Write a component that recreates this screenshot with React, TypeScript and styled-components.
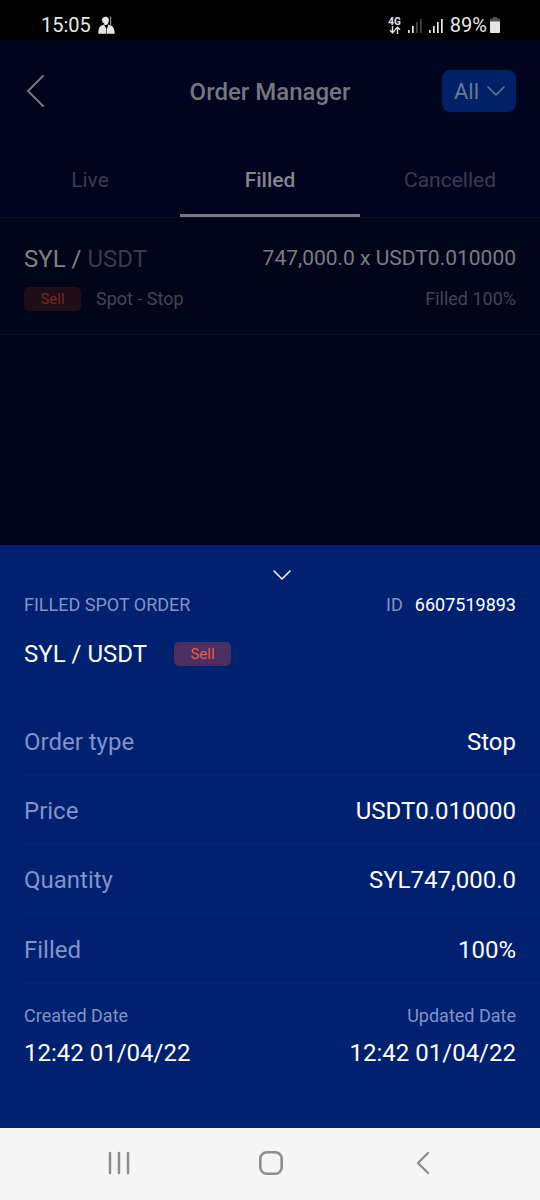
import React from "react";
import styled, { createGlobalStyle } from "styled-components";

const GlobalStyle = createGlobalStyle`
  *, *::before, *::after { box-sizing: border-box; }
  body { margin: 0; background: #02041a; font-family: Roboto, "Noto Sans", sans-serif; }
  h1, h2, p, dl, dd { margin: 0; font-weight: 400; }
  button { font: inherit; border: 0; padding: 0; background: none; color: inherit; cursor: pointer; }
  svg { display: block; flex: none; }
`;

const Screen = styled.div`
  display: flex;
  flex-direction: column;
  min-height: 100vh;
`;

const StatusBar = styled.div`
  display: flex;
  align-items: center;
  justify-content: space-between;
  height: 40px;
  padding: 10px 40px 0 41px;
  background: #000;
  color: #e6e6e6;
  font-size: 20px;
  line-height: 24px;
`;

const StatusGroup = styled.div<{ $gap: number }>`
  display: flex;
  align-items: center;
  gap: ${(p) => p.$gap}px;
`;

const Network = styled.div`
  display: flex;
  flex-direction: column;
  align-items: center;
  font-size: 10px;
  font-weight: 700;
  line-height: 9px;
`;

const Header = styled.header`
  display: grid;
  grid-template-columns: 1fr auto 1fr;
  align-items: center;
  height: 104px;
  padding: 0 24px 2px;
  background: #00041e;
  color: #74777d;
`;

const Title = styled.h1`
  padding-top: 2px;
  font-size: 24px;
  font-weight: 500;
  line-height: 32px;
`;

const BackButton = styled.button`
  justify-self: start;
`;

const FilterButton = styled.button`
  && {
    display: flex;
    align-items: center;
    justify-content: space-between;
    justify-self: end;
    width: 74px;
    height: 42px;
    padding: 0 11px 0 12px;
    border-radius: 8px;
    background: #002068;
    color: #6c7894;
    font-size: 22px;
  }
`;

const Tabs = styled.div`
  display: grid;
  grid-template-columns: repeat(3, 1fr);
  height: 74px;
  background: #00041e;
  border-bottom: 1px solid #040d2c;
`;

const Tab = styled.button<{ $active?: boolean }>`
  && {
    padding-top: 2px;
    border-bottom: 3px solid ${(p) => (p.$active ? "#777a80" : "transparent")};
    color: ${(p) => (p.$active ? "#85878d" : "#383c52")};
    font-size: 21px;
    font-weight: ${(p) => (p.$active ? 500 : 400)};
  }
`;

const OrderRow = styled.article`
  display: flex;
  flex-direction: column;
  gap: 12px;
  height: 117px;
  padding: 25px 24px 0;
  border-bottom: 1px solid #040f34;
`;

const Line = styled.div`
  display: flex;
  align-items: center;
  justify-content: space-between;
`;

const OrderPair = styled.h2`
  color: #808286;
  font-size: 24px;
  line-height: 32px;

  span { color: #383b4e; }
`;

const OrderAmount = styled.p`
  padding-bottom: 2px;
  color: #7a7c81;
  font-size: 21px;
  line-height: 28px;
`;

const OrderNote = styled.span`
  color: #424557;
  font-size: 18px;
  line-height: 24px;
`;

const TagGroup = styled.div`
  display: flex;
  align-items: center;
  gap: 15px;
`;

const SellTag = styled.span<{ $dimmed?: boolean }>`
  width: 57px;
  height: 24px;
  border-radius: 5px;
  background: ${(p) => (p.$dimmed ? "#210d18" : "#4b2f60")};
  color: ${(p) => (p.$dimmed ? "#75291b" : "#ee594a")};
  font-size: 15px;
  line-height: 24px;
  text-align: center;
`;

const Sheet = styled.section`
  display: flex;
  flex-direction: column;
  min-height: 583px;
  margin-top: auto;
  background: #002070;
  color: #fff;
`;

const CollapseButton = styled.button`
  && {
    display: flex;
    justify-content: center;
    padding: 25px 0 13px 24px;
  }
`;

const SheetLine = styled(Line)`
  padding: 0 24px;
  font-size: 18px;
  line-height: 24px;
`;

const Muted = styled.span`
  color: #8193cb;
`;

const OrderId = styled.p`
  display: flex;
  gap: 12px;
`;

const SheetPair = styled.div`
  display: flex;
  align-items: center;
  gap: 27px;
  padding: 20px 24px 36px;

  h2 { font-size: 24px; line-height: 34px; }
`;

const Details = styled.dl`
  margin-left: 24px;
`;

const DetailRow = styled.div`
  display: flex;
  align-items: center;
  justify-content: space-between;
  height: 69px;
  padding: 2px 24px 0 0;
  border-bottom: 1px solid #032678;
  font-size: 24px;
  line-height: 32px;

  &:last-child { height: 70px; }

  dt { color: #8193cb; }
`;

const Dates = styled.dl`
  display: flex;
  justify-content: space-between;
  padding: 20px 24px 0;

  div:last-child { text-align: right; }

  dt { color: #8193cb; font-size: 18px; line-height: 24px; }

  dd { margin-top: 9px; font-size: 24px; line-height: 32px; }
`;

const NavBar = styled.nav`
  display: grid;
  grid-template-columns: repeat(3, 152px);
  justify-content: center;
  height: 72px;
  padding: 0 0 2px 2px;
  background: #f5f5f5;
  color: #8c8c8c;

  button { display: grid; place-items: center; }
`;

function Signal({ strength }: { strength: number }) {
  return (
    <svg width="14" height="15" viewBox="0 0 14 15" fill="#e6e6e6" aria-hidden="true">
      {[3, 7, 11, 14].map((h, i) => (
        <rect key={h} x={i * 4} y={15 - h} width="1.7" height={h} opacity={i < strength ? 1 : 0.3} />
      ))}
    </svg>
  );
}

function ChevronDown() {
  return (
    <svg width="18" height="10" viewBox="0 0 18 10" fill="none" stroke="currentColor" strokeWidth="1.5" strokeLinecap="round" strokeLinejoin="round" aria-hidden="true">
      <path d="M1 1l8 8 8-8" />
    </svg>
  );
}

function PersonIcon() {
  return (
    <svg width="17" height="18" viewBox="0 0 17 18" fill="#e6e6e6" aria-hidden="true">
      <path d="M4.500 2.200C5.500.8 7.500.3 9 1c1.600.7 2.200 2.200 1.800 4-.3 1.600-.9 3-1.800 4H6.500L6 7 4.300 6.500 4.600 5 3.500 4.500z" />
      <path d="M6 8.500L8.300 13v4.800H.3c0-3.300.7-7 2.700-8zM8.900 13l1.600-4.500 3 1.300c2.200 1 3.100 4.500 3.200 8H8.900z" />
      <path d="M12 .5h1.200v9l-1.200-.6z" opacity=".6" />
    </svg>
  );
}

const details = [
  ["Order type", "Stop"],
  ["Price", "USDT0.010000"],
  ["Quantity", "SYL747,000.0"],
  ["Filled", "100%"],
];

const dates = [
  ["Created Date", "12:42 01/04/22"],
  ["Updated Date", "12:42 01/04/22"],
];

export default function App() {
  return (
    <Screen>
      <GlobalStyle />
      <StatusBar>
        <StatusGroup $gap={7}>
          <span>15:05</span>
          <PersonIcon />
        </StatusGroup>
        <StatusGroup $gap={7}>
          <Network>
            <span>4G</span>
            <svg width="12" height="8" viewBox="0 0 12 8" fill="none" stroke="currentColor" strokeWidth="1.4" aria-hidden="true">
              <path d="M3.500 0v6.700M1 4.300l2.500 2.500L6 4.300M8.500 8V1.300M6 3.700l2.500-2.500L11 3.700" />
            </svg>
          </Network>
          <Signal strength={2} />
          <Signal strength={4} />
          <StatusGroup $gap={3}>
            <span>89%</span>
            <svg width="10" height="16" viewBox="0 0 10 16" fill="#e6e6e6" aria-hidden="true">
              <path d="M3 0h4v1.500h2q1 0 1 1V5H0V2.500q0-1 1-1h2z" fill="#555" />
              <path d="M0 4.500h10V15q0 1-1 1H1q-1 0-1-1z" />
            </svg>
          </StatusGroup>
        </StatusGroup>
      </StatusBar>

      <Header>
        <BackButton aria-label="Back">
          <svg width="22" height="32" viewBox="0 0 22 32" fill="none" stroke="currentColor" strokeWidth="2" strokeLinecap="round" strokeLinejoin="round">
            <path d="M19 1L4 16l15 15" />
          </svg>
        </BackButton>
        <Title>Order Manager</Title>
        <FilterButton>
          All
          <ChevronDown />
        </FilterButton>
      </Header>

      <Tabs role="tablist">
        <Tab role="tab" aria-selected={false}>Live</Tab>
        <Tab role="tab" aria-selected $active>Filled</Tab>
        <Tab role="tab" aria-selected={false}>Cancelled</Tab>
      </Tabs>

      <OrderRow>
        <Line>
          <OrderPair>SYL / <span>USDT</span></OrderPair>
          <OrderAmount>747,000.0 x USDT0.010000</OrderAmount>
        </Line>
        <Line>
          <TagGroup>
            <SellTag $dimmed>Sell</SellTag>
            <OrderNote>Spot - Stop</OrderNote>
          </TagGroup>
          <OrderNote>Filled 100%</OrderNote>
        </Line>
      </OrderRow>

      <Sheet>
        <CollapseButton aria-label="Close order details">
          <ChevronDown />
        </CollapseButton>
        <SheetLine>
          <Muted>FILLED SPOT ORDER</Muted>
          <OrderId>
            <Muted>ID</Muted>
            <span>6607519893</span>
          </OrderId>
        </SheetLine>
        <SheetPair>
          <h2>SYL / USDT</h2>
          <SellTag>Sell</SellTag>
        </SheetPair>
        <Details>
          {details.map(([label, value]) => (
            <DetailRow key={label}>
              <dt>{label}</dt>
              <dd>{value}</dd>
            </DetailRow>
          ))}
        </Details>
        <Dates>
          {dates.map(([label, value]) => (
            <div key={label}>
              <dt>{label}</dt>
              <dd>{value}</dd>
            </div>
          ))}
        </Dates>
      </Sheet>

      <NavBar aria-label="System navigation">
        <button aria-label="Recent apps">
          <svg width="22" height="24" viewBox="0 0 22 24" fill="none" stroke="currentColor" strokeWidth="2.500" strokeLinecap="round">
            <path d="M2 2v20M11 2v20M20 2v20" />
          </svg>
        </button>
        <button aria-label="Home">
          <svg width="24" height="24" viewBox="0 0 24 24" fill="none" stroke="currentColor" strokeWidth="2.600">
            <rect x="1.300" y="1.300" width="21.400" height="21.400" rx="6.500" />
          </svg>
        </button>
        <button aria-label="Go back">
          <svg width="14" height="24" viewBox="0 0 14 24" fill="none" stroke="currentColor" strokeWidth="2.400" strokeLinecap="round" strokeLinejoin="round">
            <path d="M12 2L2 12l10 10" />
          </svg>
        </button>
      </NavBar>
    </Screen>
  );
}
